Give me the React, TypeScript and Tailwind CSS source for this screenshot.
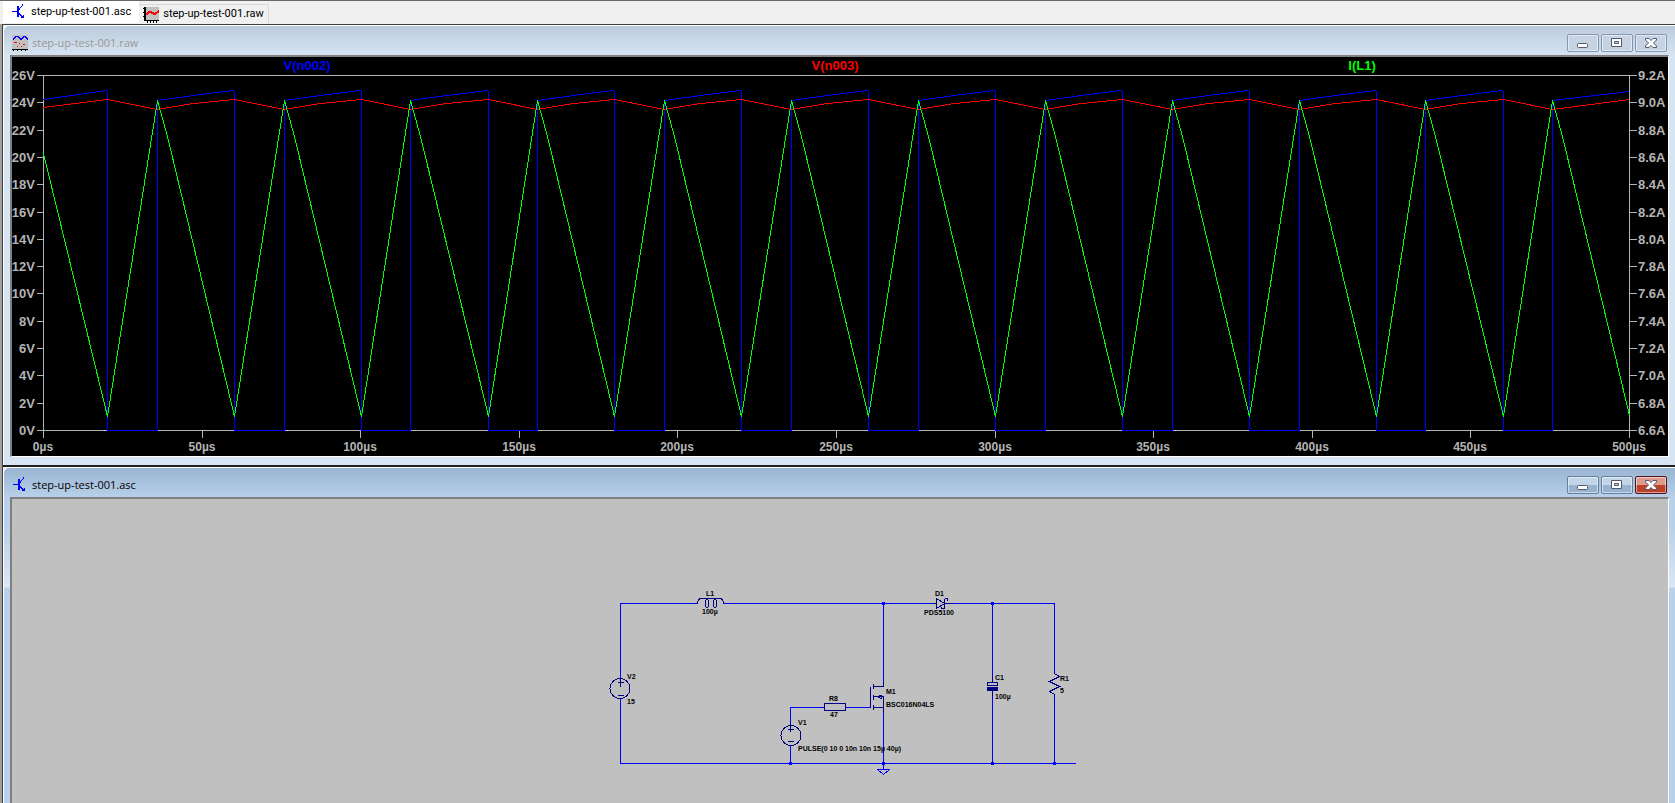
import type { ReactNode } from "react";

const PLOT = { left: 31, right: 1617, top: 18, bottom: 373 };

const timeToX = (t: number) => PLOT.left + (t * (PLOT.right - PLOT.left)) / 500;

const voltTicks = Array.from({ length: 14 }, (_, i) => `${26 - i * 2}V`);
const ampTicks = Array.from({ length: 14 }, (_, i) => `${(9.2 - i * 0.2).toFixed(1)}A`);
const timeTicks = Array.from({ length: 11 }, (_, i) => i * 50);

const tickY = (i: number) => Math.round(PLOT.top + (i * (PLOT.bottom - PLOT.top)) / 13);

function buildTraces() {
  const sw: string[] = [`${PLOT.left},42`];
  const out: string[] = [`${PLOT.left},50`];
  const coil: string[] = [`${PLOT.left},96`];
  for (let t = 20; t < 500; t += 40) {
    const off = Math.ceil(timeToX(t));
    const on = Math.floor(timeToX(t + 16));
    sw.push(`${off - 1},33`, `${off},34`, `${off},373`, `${on},373`, `${on},43`);
    out.push(`${off},42`, `${on},52`);
    coil.push(`${off},359`, `${on},43`);
    if (t < 460) {
      sw.push(`${on + 36},38`);
      out.push(`${on + 36},46`);
    }
    coil.push(`${on + 10},79`);
  }
  sw.push(`${PLOT.right},34`);
  out.push(`${PLOT.right},42`);
  coil.push(`${PLOT.right},358`);
  return { sw: sw.join(" "), out: out.join(" "), coil: coil.join(" ") };
}

function TransistorIcon() {
  return (
    <svg width="16" height="16" viewBox="0 0 16 16" fill="none" stroke="#0000ff" shapeRendering="crispEdges" aria-hidden="true">
      <path d="M1 7.5h5M8 5.500L12 .5M8 9.500l4 4" />
      <path d="M7 2v11" strokeWidth="2" />
      <path d="M9 14h4v-4z" fill="#0000ff" stroke="none" />
    </svg>
  );
}

function WaveTabIcon() {
  return (
    <svg width="16" height="16" viewBox="0 0 16 16" fill="none" shapeRendering="crispEdges" aria-hidden="true">
      <path d="M1 0h15v14H1z" fill="#c0c0c0" />
      <path d="M2 0v14" stroke="#000" strokeWidth="2" />
      <path d="M0 1.5h2M0 5.5h2M0 9.500h2M1 13.5h15M4.5 13v3M7.5 13v3M10.5 13v3M13.5 13v3" stroke="#000" />
      <path d="M3 8l3-3h2l3 2h1l4-3" stroke="#ff0000" strokeWidth="2" />
    </svg>
  );
}

function WaveWindowIcon() {
  return (
    <svg width="16" height="16" viewBox="0 0 16 16" fill="none" shapeRendering="crispEdges" aria-hidden="true">
      <path d="M0 0h16v14H0z" fill="#c0c0c0" />
      <path d="M1 4.5L4 1.5h2l3 3 3-3h1l3 3" stroke="#0000ff" />
      <path d="M2 7.5h3M7 8.5h1M11 9.5h2M5 11.500h1M9 11.500h1" stroke="#ff0000" />
      <path d="M0 14.5h16M1.500 14v2M5.500 14v2M9.500 14v2M13.500 14v2" stroke="#000" />
    </svg>
  );
}

function WindowControls({ active }: { active: boolean }) {
  const base = "flex h-[18px] w-8 items-center justify-center rounded-xs border shadow-[inset_0_0_0_1px_#ffffff80]";
  const normal = active
    ? "border-[#66809c] bg-linear-to-b from-[#c3d5e8] from-50% to-[#98b3d0] to-50%"
    : "border-[#8696b0] bg-[#c5d3e3]";
  const close = active ? "border-[#4a1420] bg-linear-to-b from-[#e09a8c] from-50% to-[#bd4027] to-50%" : normal;
  return (
    <div className="flex gap-0.5">
      <button type="button" aria-label="Minimize" className={`${base} ${normal}`}>
        <svg width="12" height="12" viewBox="0 0 12 12" aria-hidden="true">
          <rect x="0.5" y="6.5" width="10" height="4" rx="1" fill="#fff" stroke="#53586c" />
        </svg>
      </button>
      <button type="button" aria-label="Maximize" className={`${base} ${normal}`}>
        <svg width="12" height="12" viewBox="0 0 12 12" aria-hidden="true">
          <path d="M.5 1.5h10v8H.5zM3.5 4.5h4v2h-4z" fill="#fff" fillRule="evenodd" stroke="#53586c" />
        </svg>
      </button>
      <button type="button" aria-label="Close" className={`${base} ${close}`}>
        <svg width="12" height="12" viewBox="0 0 12 12" aria-hidden="true">
          <path d="M.5 1.5h3.500L6 3.500l2-2h3.500v1.500L8.500 6l3 3v1.500H8l-2-2-2 2H.5V9l3-3-3-3z" fill="#fff" stroke="#53586c" />
        </svg>
      </button>
    </div>
  );
}

type WindowProps = {
  title: string;
  icon: ReactNode;
  active?: boolean;
  className: string;
  children: ReactNode;
};

function MdiWindow({ title, icon, active = false, className, children }: WindowProps) {
  return (
    <section className={`flex flex-col rounded-tl-md border-t border-l border-white px-1.5 ${className}`}>
      <header className="flex h-[29px] shrink-0 items-center justify-between px-0.5 pt-[5px]">
        <h2 className={`flex items-center gap-1 font-["Open_Sans","Noto_Sans",sans-serif] text-[11px] ${active ? "text-black" : "text-[#999999]"}`}>
          {icon}
          {title}
        </h2>
        <WindowControls active={active} />
      </header>
      <div className="flex grow flex-col border-t-2 border-r border-b border-l-2 border-t-[#808080] border-r-white border-b-white border-l-[#808080]">
        {children}
      </div>
    </section>
  );
}

function WaveformPlot() {
  const traces = buildTraces();
  return (
    <svg
      viewBox="0 0 1656 399"
      className='block h-auto w-full bg-black font-["Liberation_Sans",Arial,sans-serif] text-[13px] font-bold'
      role="img"
      aria-label="Waveforms"
    >
      <g textAnchor="middle">
        <text x="295" y="13" fill="#0000ff">V(n002)</text>
        <text x="823" y="13" fill="#ff0000">V(n003)</text>
        <text x="1350" y="13" fill="#00ff00">I(L1)</text>
      </g>
      <g fill="#b4b4b4">
        {voltTicks.map((label, i) => (
          <text key={label} x="23" y={tickY(i) + 5} textAnchor="end">{label}</text>
        ))}
        {ampTicks.map((label, i) => (
          <text key={label} x="1626" y={tickY(i) + 5}>{label}</text>
        ))}
      </g>
      <g fill="#b4b4b4" textAnchor="middle" className="text-[12px]">
        {timeTicks.map((t) => (
          <text key={t} x={Math.round(timeToX(t))} y="394">{t}µs</text>
        ))}
      </g>
      <g transform="translate(.5 .5)" fill="none" shapeRendering="crispEdges">
        <g stroke="#b4b4b4">
          <rect x={PLOT.left} y={PLOT.top} width={PLOT.right - PLOT.left} height={PLOT.bottom - PLOT.top} />
          {voltTicks.map((label, i) => (
            <path key={label} d={`M24 ${tickY(i)}H31M1617 ${tickY(i)}H1624`} />
          ))}
          {timeTicks.map((t) => (
            <path key={t} d={`M${Math.round(timeToX(t))} 373v7`} />
          ))}
        </g>
        <polyline points={traces.sw} stroke="#0000ff" />
        <polyline points={traces.out} stroke="#ff0000" />
        <polyline points={traces.coil} stroke="#00ff00" />
      </g>
    </svg>
  );
}

function Schematic() {
  return (
    <svg
      viewBox="0 0 1656 304"
      className='block h-auto w-full bg-[#c0c0c0] font-["Liberation_Sans",Arial,sans-serif] text-[7px] font-bold'
      role="img"
      aria-label="Step-up converter schematic"
    >
      <g transform="translate(.5 .5)" fill="none" shapeRendering="crispEdges">
        {/* wires */}
        <path
          stroke="#0000ff"
          d="M608 178V104H685M711 104H919M939 104H1042V172M980 104V177M608 199V264H1063M871 104V182M871 213V269M778 225V208H812M833 208H858M778 246V264M980 195V264M1042 195V264"
        />
        <path
          d="M870 103h2v2h-2zM979 103h2v2h-2zM777 263h2v2h-2zM870 263h2v2h-2zM979 263h2v2h-2zM1041 263h2v2h-2z"
          fill="#0000ff"
          stroke="#0000ff"
        />
        <path d="M865 270H877L871 275z" stroke="#0000ff" />
        {/* parts */}
        <g stroke="#000080">
          <path d="M685 104c0-3 1-5 4-5h18c3 0 4 2 4 5" />
          <ellipse cx="694.500" cy="104" rx="1.500" ry="4.500" />
          <ellipse cx="702.500" cy="104" rx="1.500" ry="4.500" />
          <circle cx="607.500" cy="189" r="10" />
          <path d="M608 178v9M605 183h6M605 196h6" />
          <circle cx="778.500" cy="236" r="10" />
          <path d="M778 223v9M775 230h6M775 242h6" />
          <path d="M812 204h21v7h-21z" />
          <path d="M858 187v21M861 184v5M861 195v5M861 205v5M861 187h10v-5M861 208h10M861 197h3M871 213v-16h-7l5 2v-3l-4 1" />
          <path d="M919 104h5M924 99v10l8-5zM932 99v10M932 99h3v2M932 109h-3v-2M932 104h7" />
          <path d="M980 177v5M975 183h10v3h-10zM980 191v5" />
          <path d="M975 188h10v3h-10z" fill="#000080" />
          <path d="M1042 172v2l5 3-10 5 10 5-10 5 5 3v2" />
        </g>
      </g>
      <g fill="#000">
        <text x="694" y="97">L1</text>
        <text x="690" y="115">100µ</text>
        <text x="923" y="97">D1</text>
        <text x="912" y="116">PDS5100</text>
        <text x="615" y="180">V2</text>
        <text x="615" y="205">15</text>
        <text x="817" y="202">R8</text>
        <text x="818" y="218">47</text>
        <text x="786" y="226">V1</text>
        <text x="786" y="252">PULSE(0 10 0 10n 10n 15µ 40µ)</text>
        <text x="874" y="195">M1</text>
        <text x="874" y="208">BSC016N04LS</text>
        <text x="983" y="181">C1</text>
        <text x="983" y="200">100µ</text>
        <text x="1048" y="182">R1</text>
        <text x="1048" y="194">5</text>
      </g>
    </svg>
  );
}

export default function App() {
  return (
    <main className="flex min-h-screen flex-col overflow-hidden border-t border-[#686868] bg-[#f0f0f0]">
      <nav className="flex h-[23px] items-end pl-[3px] font-[Roboto,sans-serif] text-[11px] text-black">
        <button type="button" className="flex h-[22px] items-center gap-1 self-start bg-white px-2">
          <TransistorIcon />
          step-up-test-001.asc
        </button>
        <button type="button" className="flex h-5 items-center gap-1 border-t border-r border-[#d9d9d9] px-1">
          <WaveTabIcon />
          step-up-test-001.raw
        </button>
      </nav>
      <div className="flex grow flex-col border-l-2 border-[#a0a0a0]">
        <div className="flex grow flex-col border-t border-l border-[#404040] bg-[#f0f0f0]">
          <MdiWindow
            title="step-up-test-001.raw"
            icon={<WaveWindowIcon />}
            className="bg-[#d7e4f2] bg-linear-to-b from-[#bccbdb] to-[#d7e4f2] to-[30px] pb-2"
          >
            <WaveformPlot />
          </MdiWindow>
          <div className="flex grow flex-col border-t-2 border-[#202020] bg-[#f0f0f0]">
            <MdiWindow
              title="step-up-test-001.asc"
              icon={<TransistorIcon />}
              active
              className="grow bg-[linear-gradient(to_bottom,#99b4d1_0,#b9d1ea_30px,#b9d1ea_60px,#dce7f5_119px,#b9d1ea_120px)]"
            >
              <Schematic />
            </MdiWindow>
          </div>
        </div>
      </div>
    </main>
  );
}
